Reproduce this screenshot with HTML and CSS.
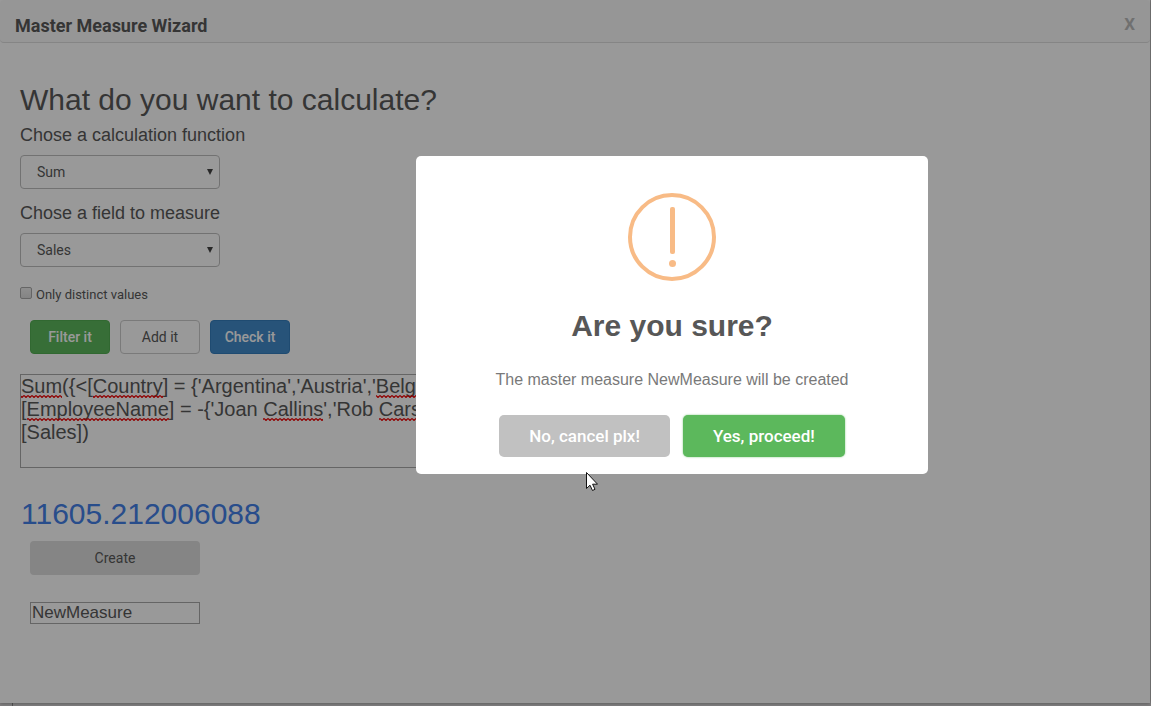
FILE: index.html
```
<!DOCTYPE html>
<html lang="en">
<head>
<meta charset="utf-8">
<title>Master Measure Wizard</title>
<link rel="stylesheet" href="styles.css">
</head>
<body>
<main class="wizard">
  <header class="wizard-header">
    <h1 class="wizard-title">Master Measure Wizard</h1>
    <button class="wizard-close" type="button" aria-label="Close">X</button>
  </header>
  <form class="wizard-body">
    <h2 class="question">What do you want to calculate?</h2>
    <label class="field-label" for="fn">Chose a calculation function</label>
    <div class="select-wrap">
      <select class="select" id="fn"><option>Sum</option></select>
      <svg class="select-arrow" viewBox="0 0 6 6" aria-hidden="true"><path d="M0 0h6L3 6z"/></svg>
    </div>
    <label class="field-label" for="field">Chose a field to measure</label>
    <div class="select-wrap">
      <select class="select" id="field"><option>Sales</option></select>
      <svg class="select-arrow" viewBox="0 0 6 6" aria-hidden="true"><path d="M0 0h6L3 6z"/></svg>
    </div>
    <div class="check-row">
      <input class="check" type="checkbox" id="distinct">
      <label for="distinct">Only distinct values</label>
    </div>
    <div class="actions">
      <button class="btn btn-success" type="button">Filter it</button>
      <button class="btn btn-default" type="button">Add it</button>
      <button class="btn btn-primary" type="button">Check it</button>
    </div>
    <div class="expression-wrap">
      <textarea class="expression" aria-label="Expression" spellcheck="false">Sum({&lt;[Country] = {'Argentina','Austria','Belgium'},
[EmployeeName] = -{'Joan Callins','Rob Carson'}&gt;}
[Sales])</textarea>
      <svg class="spelling" aria-hidden="true">
        <defs>
          <pattern id="wave" width="4" height="3" patternUnits="userSpaceOnUse">
            <path d="M0 .5L2 2.5L4 .5" fill="none" stroke="#f00000" stroke-width="1.2"/>
          </pattern>
        </defs>
        <g fill="url(#wave)" transform="translate(0 21)">
          <rect x="1" width="41" height="3"/>
          <rect x="73" width="70" height="3"/>
          <rect x="356" width="64" height="3"/>
        </g>
        <g fill="url(#wave)" transform="translate(0 44)">
          <rect x="7" width="142" height="3"/>
          <rect x="243" width="60" height="3"/>
          <rect x="359" width="60" height="3"/>
        </g>
      </svg>
    </div>
    <output class="result">11605.212006088</output>
    <div class="create">
      <button class="btn btn-create" type="button">Create</button>
      <input class="name-input" type="text" value="NewMeasure" aria-label="Measure name">
    </div>
  </form>
</main>

<div class="overlay">
  <section class="alert" role="alertdialog" aria-modal="true" aria-labelledby="alert-title" aria-describedby="alert-text">
    <svg class="alert-icon" viewBox="0 0 88 88" aria-hidden="true">
      <circle cx="44" cy="44" r="42" fill="none" stroke="#f8bb86" stroke-width="4"/>
      <rect x="42" y="14" width="5" height="47" rx="2" fill="#f8bb86"/>
      <circle cx="44.500" cy="70.500" r="3.500" fill="#f8bb86"/>
    </svg>
    <h2 class="alert-title" id="alert-title">Are you sure?</h2>
    <p class="alert-text" id="alert-text">The master measure NewMeasure will be created</p>
    <div class="alert-actions">
      <button class="alert-btn alert-cancel" type="button">No, cancel plx!</button>
      <button class="alert-btn alert-confirm" type="button">Yes, proceed!</button>
    </div>
  </section>
</div>
<svg class="cursor" viewBox="0 0 12 19" aria-hidden="true">
  <path d="M.5 .5V16.500L4 13.200L6.500 18.500L9 17.300L6.600 12.200H11.500Z" fill="#fff" stroke="#111" stroke-linejoin="round"/>
</svg>
</body>
</html>
```
FILE: styles.css
```
* {
  box-sizing: border-box;
}

body {
  margin: 0;
  min-height: 100vh;
  padding: 0 1px 3px 0;
  display: flex;
  background: linear-gradient(90deg, #d6d4d5 12px, #8c8c8c 12px, #8c8c8c 13px, #d6d4d5 13px);
  color: #595959;
  font-family: "Liberation Sans", Arial, sans-serif;
}

h1, h2, p {
  margin: 0;
}

button, input, select, textarea {
  margin: 0;
  font-family: inherit;
  color: inherit;
}

.wizard {
  flex: 1;
  background: #fff;
  box-shadow: 0 0 4px rgba(0, 0, 0, 0.4);
}

.wizard-header {
  display: flex;
  justify-content: space-between;
  align-items: center;
  height: 43px;
  padding: 10px 15px 0;
  background: #fbfbfb;
  border-bottom: 1px solid #dedede;
  border-radius: 4px;
}

.wizard-title {
  font: bold 18px/24px Roboto, sans-serif;
}

.wizard-close {
  padding: 0 0 4px;
  border: 0;
  background: none;
  color: #bbb;
  font: bold 17px/20px Roboto, sans-serif;
}

.wizard-body {
  padding: 40px 20px;
}

.question {
  font-size: 30px;
  font-weight: 400;
  line-height: 34px;
}

.field-label {
  display: block;
  margin: 8px 0 10px;
  font-size: 18px;
  line-height: 20px;
}

.select-wrap {
  position: relative;
  width: 200px;
  margin-bottom: 14px;
}

.select {
  display: block;
  width: 100%;
  height: 34px;
  padding: 0 16px;
  appearance: none;
  border: 1px solid #bfbfbf;
  border-radius: 4px;
  background: #fff;
  font: 14px Roboto, sans-serif;
}

.select-arrow {
  position: absolute;
  top: 14px;
  right: 7px;
  width: 6px;
  height: 6px;
  fill: #444;
}

.check-row {
  display: flex;
  align-items: center;
  gap: 4px;
  margin-top: 19px;
  font: 13px/18px Roboto, sans-serif;
}

.check {
  width: 12px;
  height: 12px;
  margin-bottom: 5px;
  appearance: none;
  border: 1px solid #a9a9a9;
  border-radius: 2px;
  background: linear-gradient(#eee, #dcdcdc);
}

.actions {
  display: flex;
  gap: 10px;
  margin: 16px 10px 20px;
}

.btn {
  width: 80px;
  height: 34px;
  padding: 0;
  border: 1px solid transparent;
  border-radius: 4px;
  font: 14px/20px Roboto, sans-serif;
}

.btn-success {
  background: #5cb85c;
  border-color: #53ae53;
  color: #fff;
}

.btn-default {
  background: #fff;
  border-color: #ccc;
}

.btn-primary {
  background: #428bca;
  border-color: #357ebd;
  color: #fff;
}

.btn-success, .btn-primary {
  font-weight: 500;
}

.expression-wrap {
  position: relative;
  max-width: 800px;
}

.expression {
  display: block;
  width: 100%;
  height: 94px;
  padding: 0;
  border: 1px solid #a9a9a9;
  background: #fff;
  font-size: 20px;
  line-height: 23px;
  resize: none;
}

.spelling {
  position: absolute;
  inset: 0;
  width: 100%;
  height: 100%;
  pointer-events: none;
}

.result {
  display: block;
  margin: 29px 0 10px 1px;
  color: #4480e8;
  font-size: 30px;
  line-height: 34px;
}

.create {
  display: flex;
  flex-direction: column;
  gap: 27px;
  width: 170px;
  margin-left: 10px;
}

.btn-create {
  width: 100%;
  background: #dedede;
}

.name-input {
  width: 100%;
  height: 22px;
  padding: 0 1px;
  border: 1px solid #a9a9a9;
  background: #fff;
  font-size: 17px;
}

.overlay {
  position: fixed;
  inset: 0;
  display: flex;
  justify-content: center;
  align-items: center;
  padding: 0 0 76px 193px;
  background: rgba(0, 0, 0, 0.4);
}

.alert {
  display: flex;
  flex-direction: column;
  align-items: center;
  width: 512px;
  padding: 37px 17px 17px;
  border-radius: 5px;
  background: #fff;
  text-align: center;
}

.alert-icon {
  width: 88px;
  height: 88px;
}

.alert-title {
  margin: 25px 0 24px;
  color: #575757;
  font-size: 30px;
  line-height: 40px;
}

.alert-text {
  color: #797979;
  font-size: 16px;
  line-height: 20px;
}

.alert-actions {
  display: flex;
  gap: 13px;
  margin-top: 25px;
}

.alert-btn {
  height: 42px;
  padding: 0 30px;
  border: 0;
  border-radius: 5px;
  color: #fff;
  font: 500 17px/22px Roboto, sans-serif;
}

.alert-cancel {
  background: #c1c1c1;
}

.alert-confirm {
  background: #5cb85c;
  box-shadow: 0 0 2px rgba(92, 184, 92, 0.8);
}

.cursor {
  position: fixed;
  top: 472px;
  left: 586px;
  width: 12px;
  height: 19px;
}
```
